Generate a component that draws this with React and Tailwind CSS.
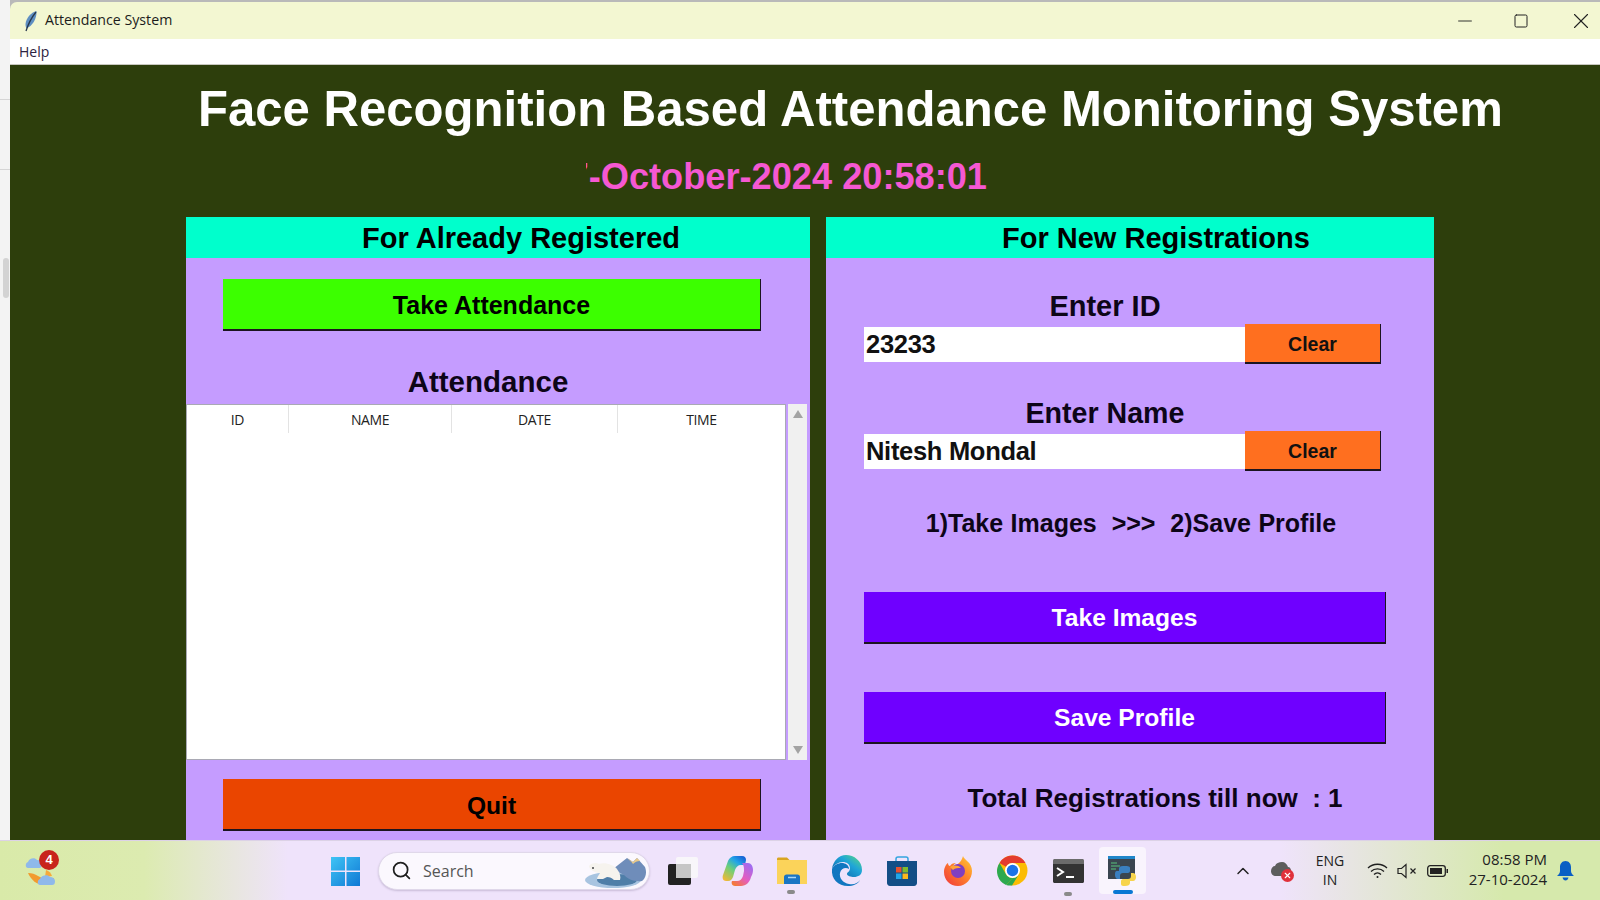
import React from 'react';
import { Search, ChevronUp, X, Minus, Square } from 'lucide-react';

const sans = "font-['Liberation_Sans',Arial,sans-serif]";
const ui = "font-['Open_Sans','Noto_Sans',sans-serif]";

const RaisedButton = ({ label, className }) => (
  <button className={`${sans} block font-bold pt-[4px] border-b-2 border-r border-[#1c1420] ${className}`}>{label}</button>
);

const Feather = () => (
  <svg width="16" height="22" viewBox="0 0 16 22">
    <path d="M13.5 1C8 2.5 3 8 2.5 14c0 2 .4 3.4 1 4.2C9 16.5 14 9 13.5 1z" fill="#5f8fc2" />
    <path d="M13 2C9 7 5.5 13 3 21" stroke="#27384d" strokeWidth="1.3" fill="none" />
  </svg>
);

const Weather = () => (
  <div className="relative w-[34px] h-[36px]">
    <svg width="34" height="36" viewBox="0 0 34 36" className="absolute left-0 top-0">
      <path d="M3 23c3 7 9 12 16 12 6 0 9-3 10-7-5 2-11 1-16-2-3-2-6-3-10-3z" fill="#f29a2e" />
      <path d="M21 20c3 1 5 3 6 6l-7 1z" fill="#f6a93a" />
      <path d="M3 18c-3 0-3-5 0-6 1-4 7-5 9-2 3 0 4 2 4 4 1 3 0 4-2 4z" fill="#8fb9ea" />
      <path d="M15 35c-3 0-3-5 0-6 1-4 8-5 10-2 3 0 5 2 5 4 0 3-1 4-3 4z" fill="#8fb9ea" />
    </svg>
    <span className={`${sans} absolute left-[14px] top-0 flex items-center justify-center w-[20px] h-[20px] rounded-full bg-[#c8241c] text-white text-[13px] font-bold`}>4</span>
  </div>
);

const WinLogo = () => (
  <svg width="30" height="30" viewBox="0 0 30 30">
    <defs>
      <linearGradient id="win" x1="0" y1="0" x2="1" y2="1">
        <stop offset="0" stopColor="#3fc4f5" />
        <stop offset="1" stopColor="#0f78d4" />
      </linearGradient>
    </defs>
    <path d="M0 1h14v13.500H0zM15.500 1H29v13.500H15.500zM0 16h14v14H0zM15.500 16H29v14H15.500z" fill="url(#win)" />
  </svg>
);

const Bear = () => (
  <svg width="64" height="36" viewBox="0 0 64 36">
    <ellipse cx="30" cy="27" rx="28" ry="8" fill="#a8c4e0" />
    <ellipse cx="34" cy="27" rx="20" ry="6" fill="#4f7ea8" />
    <path d="M30 16l14-11 6 4 4-4 8 9c2 5 1 11-3 14-8 1-14-2-18-6z" fill="#6f8dba" />
    <path d="M44 5l6 4 4-4 3 3c-3 0-5 1-7 3-2-3-4-4-6-6z" fill="#e8c98a" />
    <path d="M6 13c2-3 7-4 10-2 6-2 15 1 18 5 3 4 4 8 3 11h-6c-2-2-4-3-7-3l-4 2-6 0c0-2 2-4 3-6-3 0-5-1-7-2-2-1-4-3-4-5z" fill="#f6f3ee" />
    <circle cx="10" cy="15" r="1" fill="#444" />
  </svg>
);

const TaskView = () => (
  <div className="relative w-[30px] h-[28px]">
    <div className="absolute left-0 bottom-0 w-[23px] h-[21px] rounded-[2px] bg-[#222222]" />
    <div className="absolute right-0 top-0 w-[22px] h-[21px] rounded-[2px] bg-[#f8f6fa]" />
    <div className="absolute left-[8px] top-[7px] w-[15px] h-[14px] bg-[#c6c6c6]" />
  </div>
);

const Copilot = () => (
  <svg width="32" height="32" viewBox="0 0 32 32">
    <defs>
      <linearGradient id="cpa" x1="0.1" y1="1" x2="0.8" y2="0">
        <stop offset="0" stopColor="#f7b733" />
        <stop offset="0.45" stopColor="#6ccf7a" />
        <stop offset="0.75" stopColor="#22a5e8" />
        <stop offset="1" stopColor="#1766d6" />
      </linearGradient>
      <linearGradient id="cpb" x1="0.2" y1="1" x2="0.9" y2="0.1">
        <stop offset="0" stopColor="#f47a38" />
        <stop offset="0.45" stopColor="#e45cc0" />
        <stop offset="1" stopColor="#9f6cf0" />
      </linearGradient>
    </defs>
    <path d="M13 1h7c3 0 4 2 4 4l-1 5h-4c-3 0-5 2-6 5l-2 7c-1 2-2 4-5 4H4C1 26 0 23 1 20L6 6c1-3 4-5 7-5z" fill="url(#cpa)" />
    <path d="M20 8h6c3 0 5 3 5 7 0 3-1 5-2 7-1 5-5 9-10 9h-6c-3 0-4-3-3-5h5c3 0 5-2 6-5l1-5c0-3 0-6-2-8z" fill="url(#cpb)" />
  </svg>
);

const Explorer = () => (
  <svg width="32" height="28" viewBox="0 0 32 28">
    <path d="M1 2c0-1 .5-1.500 1.500-1.500H11l3 3H1z" fill="#d9a520" />
    <path d="M1 3h30v24H1z" fill="#fbd35a" />
    <path d="M8 27v-7c0-1.500 1-2.500 2.500-2.500h11c1.500 0 2.500 1 2.500 2.500v7z" fill="#1a75c4" />
    <path d="M12 20.500h8" stroke="#a9d6f5" strokeWidth="1.500" />
  </svg>
);

const Edge = () => (
  <svg width="31" height="31" viewBox="0 0 31 31">
    <defs>
      <linearGradient id="edg" x1="0" y1="1" x2="1" y2="0">
        <stop offset="0" stopColor="#0c59a4" />
        <stop offset="0.6" stopColor="#1fa5d8" />
        <stop offset="1" stopColor="#5fdc7a" />
      </linearGradient>
    </defs>
    <path d="M15 0C23 0 31 6 31 15c0 5-4 7-8 7-3 0-7-1-7-3 0-2 3-2 3-6 0-4-4-6-7-6-5 0-9 3-11 7C2 6 8 0 15 0z" fill="url(#edg)" />
    <path d="M1 14c2-4 6-6 10-6 3 0 7 2 7 6-3-2-8-1-9 4-1 5 3 10 9 11 5 1 9-1 11-4-2 4-7 6-12 6C7 31 0 24 1 14z" fill="#1177c0" />
  </svg>
);

const Store = () => (
  <svg width="30" height="30" viewBox="0 0 30 30">
    <path d="M9 6V3c0-1 .8-2 2-2h8c1.200 0 2 1 2 2v3" stroke="#34a5e0" strokeWidth="1.500" fill="none" />
    <path d="M0 5h30v22c0 1.500-1.200 3-3 3H3c-1.800 0-3-1.500-3-3z" fill="#134e86" />
    <path d="M9 11h5.500v5.500H9z" fill="#e8502f" />
    <path d="M15.500 11H21v5.500h-5.500z" fill="#7fbb2d" />
    <path d="M9 17.500h5.500V23H9z" fill="#20a5e8" />
    <path d="M15.500 17.500H21V23h-5.500z" fill="#fbb81c" />
  </svg>
);

const Firefox = () => (
  <svg width="30" height="30" viewBox="0 0 30 30">
    <defs>
      <linearGradient id="ffx" x1="0" y1="1" x2="1" y2="0">
        <stop offset="0" stopColor="#f0343c" />
        <stop offset="0.6" stopColor="#ff8a2a" />
        <stop offset="1" stopColor="#ffd23a" />
      </linearGradient>
    </defs>
    <path d="M20 0c1 4 9 6 9 15 0 8-6 15-14 15S1 24 1 16C1 12 3 8 5 7c0 2 1 3 2 3 1-2 3-3 6-3-2 1-3 3-3 3 4-1 8-3 10-10z" fill="url(#ffx)" />
    <circle cx="15" cy="15" r="7" fill="#7f3fc0" />
    <path d="M7 11c3-2 8-2 11 1-3 0-6 0-8 2z" fill="#ffa436" />
  </svg>
);

const Chrome = () => (
  <svg width="31" height="31" viewBox="0 0 31 31">
    <circle cx="15.500" cy="15.500" r="15" fill="#fbbc04" />
    <path d="M15.500 .5a15 15 0 0 1 13 7.500h-13a7.500 7.500 0 0 0-6.500 3.750L2.500 8A15 15 0 0 1 15.500 .5z" fill="#e33b2e" />
    <path d="M2.500 8 9 19.250a7.500 7.500 0 0 0 6.500 3.750L9 30A15 15 0 0 1 2.500 8z" fill="#2da94f" />
    <path d="M9 30l6.500-7a7.500 7.500 0 0 0 6.500-3.750L15 30.500A15 15 0 0 1 9 30z" fill="#2da94f" />
    <circle cx="15.500" cy="15.500" r="7.500" fill="#fff" />
    <circle cx="15.500" cy="15.500" r="5.700" fill="#1a73e8" />
  </svg>
);

const Terminal = () => (
  <svg width="31" height="24" viewBox="0 0 31 24">
    <path d="M0 1.500C0 .7.700 0 1.500 0h28c.8 0 1.500.7 1.500 1.500V6H0z" fill="#6b6b6b" />
    <path d="M0 5h31v17.500c0 .8-.7 1.500-1.500 1.500h-28C.7 24 0 23.300 0 22.500z" fill="#333" />
    <path d="M4 9l6 4-6 4" stroke="#fff" strokeWidth="2" fill="none" />
    <path d="M13 18h8" stroke="#fff" strokeWidth="2" />
  </svg>
);

const PythonIdle = () => (
  <svg width="30" height="30" viewBox="0 0 30 30">
    <path d="M0 1h27v22H0z" fill="#3a4550" />
    <path d="M0 0h27v3H0z" fill="#1f86c9" />
    <path d="M3 7h6M3 10h9M3 13h5" stroke="#58c47c" strokeWidth="1" />
    <path d="M15 10c-3 0-4 1-4 3v2H9c-2 0-2 2-2 4s1 4 3 4h2v-3c0-2 1-3 3-3h5c1 0 2-1 2-2v-3c0-2-3-2-7-2z" fill="#3a7fc0" />
    <path d="M17 30c3 0 5-1 5-3v-2h3c2 0 3-2 3-4s-1-4-3-4h-2v3c0 2-1 3-3 3h-5c-1 0-2 1-2 2v3c0 2 2 2 4 2z" fill="#f7d44c" />
  </svg>
);

const OneDrive = () => (
  <div className="relative w-[22px] h-[22px]">
    <svg width="20" height="16" viewBox="0 0 20 16" className="absolute left-0 top-[1px]">
      <path d="M5 15C2 15 0 13 0 10c0-3 2-5 4-5 1-3 4-4 7-4 3 0 5 2 6 5 2 0 3 2 3 4H12v5z" fill="#5d5d5d" />
    </svg>
    <span className="absolute right-[-1px] bottom-0 flex items-center justify-center w-[13px] h-[13px] rounded-full bg-[#e0313b]">
      <X size={9} strokeWidth={3} className="text-white" />
    </span>
  </div>
);

const Wifi = () => (
  <svg width="21" height="17" viewBox="0 0 21 17" fill="none" stroke="#1f1f1f" strokeWidth="1.300">
    <path d="M1 6c5-5 14-5 19 0" />
    <path d="M4 9.500c3.500-3.500 9.500-3.500 13 0" />
    <path d="M7 12.500c2-2 5-2 7 0" />
    <circle cx="10.500" cy="15" r="1" fill="#1f1f1f" stroke="none" />
  </svg>
);

const Muted = () => (
  <svg width="20" height="16" viewBox="0 0 20 16" fill="none" stroke="#222" strokeWidth="1.200">
    <path d="M1 5.500v5h3.500L9 14.500V1.500L4.500 5.500z" />
    <path d="M13.500 5.500l5 5M18.500 5.500l-5 5" />
  </svg>
);

const Battery = () => (
  <svg width="21" height="12" viewBox="0 0 21 12">
    <rect x=".7" y=".7" width="17.600" height="10.600" rx="2.500" fill="none" stroke="#222" strokeWidth="1.300" />
    <rect x="3" y="3" width="12" height="6" fill="#222" />
    <path d="M19.500 4h1.500v4h-1.500z" fill="#222" />
  </svg>
);

const Bell = () => (
  <svg width="17" height="20" viewBox="0 0 17 20">
    <path d="M8.500 0C5 0 3 3 3 6v4c0 2-1 3-3 5h17c-2-2-3-3-3-5V6c0-3-2-6-5.500-6z" fill="#0a5fc4" />
    <path d="M5.500 16.500c.5 2 1.500 3 3 3s2.500-1 3-3z" fill="#0a5fc4" />
  </svg>
);

const TitleBar = () => (
  <div className="flex items-center h-[37px] bg-[#f3f7d2] rounded-tl-[7px]">
    <div className="ml-[13px] w-[22px]"><Feather /></div>
    <span className={`${ui} pb-[2px] text-[14.200px] text-[#1c1c1c]`}>Attendance System</span>
    <div className="ml-auto flex items-center text-[#222]">
      <div className="w-[30px] flex justify-center"><Minus size={22} strokeWidth={1} /></div>
      <div className="w-[82px] flex justify-center"><Square size={16} strokeWidth={1.500} /></div>
      <div className="w-[38px] flex justify-center"><X size={26} strokeWidth={1} /></div>
    </div>
  </div>
);

const LeftPanel = () => (
  <div className="w-[624px] h-[623px] bg-[#c59cff] overflow-hidden">
    <div className={`${sans} h-[41px] bg-[#00ffcc] flex items-center pl-[176px] pt-[2px] text-[29px] font-bold text-black`}>For Already Registered</div>
    <div className="px-[37px] pt-[21px]">
      <RaisedButton label="Take Attendance" className="w-[538px] h-[52px] bg-[#3cff00] text-[25px] text-black" />
    </div>
    <div className={`${sans} mt-[30px] mb-[2px] h-[41px] w-[604px] text-center text-[29.500px] leading-[41px] font-bold text-[#0d0518]`}>Attendance</div>
    <div className="flex items-start">
      <div className="w-[600px] h-[356px] bg-white border border-[#a9a9b4]">
        <div className={`${ui} flex h-[28px] text-[14px] text-[#222] tracking-[-0.4px]`}>
          <div className="w-[102px] flex items-center justify-center border-r border-[#e3e3e3]">ID</div>
          <div className="w-[163px] flex items-center justify-center border-r border-[#e3e3e3]">NAME</div>
          <div className="w-[166px] flex items-center justify-center border-r border-[#e3e3e3]">DATE</div>
          <div className="flex-1 flex items-center justify-center">TIME</div>
        </div>
      </div>
      <div className="ml-[2px] w-[19px] h-[356px] bg-[#f0f0f0] flex flex-col items-center justify-between py-[6px]">
        <div className="w-0 h-0 border-x-[5px] border-x-transparent border-b-[8px] border-b-[#a3a3a3]" />
        <div className="w-0 h-0 border-x-[5px] border-x-transparent border-t-[8px] border-t-[#a3a3a3]" />
      </div>
    </div>
    <div className="px-[37px] pt-[19px]">
      <RaisedButton label="Quit" className="w-[538px] h-[52px] bg-[#ea4500] text-[24.600px] text-black" />
    </div>
  </div>
);

const EntryRow = ({ label, value, labelMt, labelSize }) => (
  <div>
    <div className={`${sans} ${labelMt} ${labelSize} w-[482px] text-center leading-[34px] font-bold text-[#0d0518]`}>{label}</div>
    <div className="flex items-center mt-[1px]">
      <div className={`${sans} w-[381px] h-[35px] bg-white flex items-center pl-[2px] text-[25.500px] tracking-[-0.3px] font-bold text-[#111]`}>{value}</div>
      <RaisedButton label="Clear" className="w-[136px] h-[40px] bg-[#ff6f1f] text-[19.500px] text-[#111]" />
    </div>
  </div>
);

const RightPanel = () => (
  <div className="w-[608px] h-[623px] bg-[#c59cff] overflow-hidden">
    <div className={`${sans} h-[41px] bg-[#00ffcc] flex items-center pl-[176px] pt-[2px] text-[29px] font-bold text-black`}>For New Registrations</div>
    <div className="pl-[38px]">
      <EntryRow label="Enter ID" value="23233" labelMt="mt-[31px]" labelSize="text-[29px]" />
      <EntryRow label="Enter Name" value="Nitesh Mondal" labelMt="mt-[32px]" labelSize="text-[28.600px]" />
      <div className={`${sans} mt-[34px] w-[534px] text-center text-[25px] font-bold text-[#0d0518] whitespace-pre [word-spacing:0.5px]`}>{'1)Take Images  >>>  2)Save Profile'}</div>
      <RaisedButton label="Take Images" className="mt-[49px] w-[522px] h-[52px] bg-[#6f00ff] text-[24.600px] text-white" />
      <RaisedButton label="Save Profile" className="mt-[48px] w-[522px] h-[52px] bg-[#6f00ff] text-[24.600px] text-white" />
      <div className={`${sans} mt-[35px] w-[582px] text-center text-[26px] font-bold text-[#0d0518] whitespace-pre`}>{'Total Registrations till now  : 1'}</div>
    </div>
  </div>
);

const Taskbar = () => (
  <div className="h-[60px] flex items-center bg-[linear-gradient(90deg,#d9eaa9_0%,#dcebb0_9%,#efe3fb_18%,#efe3fb_80%,#d6e9ac_94%,#d6e9ac_100%)] border-t border-[#dcd2e6]">
    <div className="ml-[25px] w-[306px] mb-[6px]"><Weather /></div>
    <WinLogo />
    <div className="ml-[17px] w-[272px] h-[38px] rounded-full bg-[#fbf8fe] border border-[#e0d8ea] shadow-[0_1px_2px_#c9bcd8] flex items-center pl-[12px] overflow-hidden">
      <Search size={21} strokeWidth={2} className="text-[#1f1f1f]" />
      <span className={`${ui} ml-[11px] text-[16px] text-[#555]`}>Search</span>
      <div className="ml-auto mr-[2px]"><Bear /></div>
    </div>
    <div className="ml-[18px]"><TaskView /></div>
    <div className="ml-[24px]"><Copilot /></div>
    <div className="ml-[22px] relative"><Explorer /><div className="absolute left-[11px] top-[33px] w-[8px] h-[4px] rounded-full bg-[#8a8a8a]" /></div>
    <div className="ml-[23px]"><Edge /></div>
    <div className="ml-[25px]"><Store /></div>
    <div className="ml-[26px]"><Firefox /></div>
    <div className="ml-[24px]"><Chrome /></div>
    <div className="ml-[25px] relative"><Terminal /><div className="absolute left-[11px] top-[33px] w-[8px] h-[4px] rounded-full bg-[#8a8a8a]" /></div>
    <div className="ml-[15px] relative w-[47px] h-[47px] rounded-[4px] bg-[#f9f4fd] flex items-center justify-center">
      <PythonIdle />
      <div className="absolute left-[14px] bottom-0 w-[20px] h-[4px] rounded-full bg-[#0a78d4]" />
    </div>
    <ChevronUp size={20} strokeWidth={1.800} className="ml-[87px] text-[#222]" />
    <div className="ml-[18px]"><OneDrive /></div>
    <div className={`${ui} ml-[21px] mb-[2px] w-[32px] text-center text-[14px] leading-[19px] text-[#222]`}>ENG<br />IN</div>
    <div className="ml-[21px]"><Wifi /></div>
    <div className="ml-[9px]"><Muted /></div>
    <div className="ml-[10px]"><Battery /></div>
    <div className={`${ui} ml-[21px] mb-[4px] w-[78px] text-right text-[15px] leading-[20px] text-[#222] whitespace-nowrap`}>
      <div className="flex justify-end">08:58 PM</div>
      <div className="flex justify-end">27-10-2024</div>
    </div>
    <div className="ml-[10px]"><Bell /></div>
  </div>
);

const App = () => {
  return (
    <div className="w-[1600px] h-[900px] flex flex-col overflow-hidden">
      <div className="flex-1 flex min-h-0 bg-[#b9b9b9] pt-[2px]">
        <div className="w-[10px] -mt-[2px] flex flex-col bg-[#f3f3f3]">
          <div className="h-[100px] border-b border-[#d5d5d5]" />
          <div className="h-[70px] border-b border-[#d5d5d5]" />
          <div className="mt-[88px] ml-[3px] w-[6px] h-[40px] rounded-sm bg-[#d3d3d3]" />
        </div>
        <div className="flex-1 flex flex-col min-w-0">
          <TitleBar />
          <div className={`${ui} h-[25px] bg-white flex items-center pl-[9px] text-[14px] text-[#2c2240]`}>Help</div>
          <div className="flex-1 min-h-0 overflow-hidden bg-[#2d3e0c] border-t border-[#c8c8c0]">
            <div className={`${sans} mt-[14px] ml-[188px] text-[49.100px] leading-[60px] font-bold text-white whitespace-nowrap`}>Face Recognition Based Attendance Monitoring System</div>
            <div className="mt-[16px] ml-[576px] w-[401px] h-[44px] overflow-hidden flex justify-end">
              <span className={`${sans} text-[36.200px] leading-[44px] font-bold text-[#f558d2] whitespace-nowrap`}>27-October-2024 20:58:01</span>
            </div>
            <div className="mt-[18px] ml-[176px] flex gap-[16px]">
              <LeftPanel />
              <RightPanel />
            </div>
          </div>
        </div>
      </div>
      <Taskbar />
    </div>
  );
};

export default App;
